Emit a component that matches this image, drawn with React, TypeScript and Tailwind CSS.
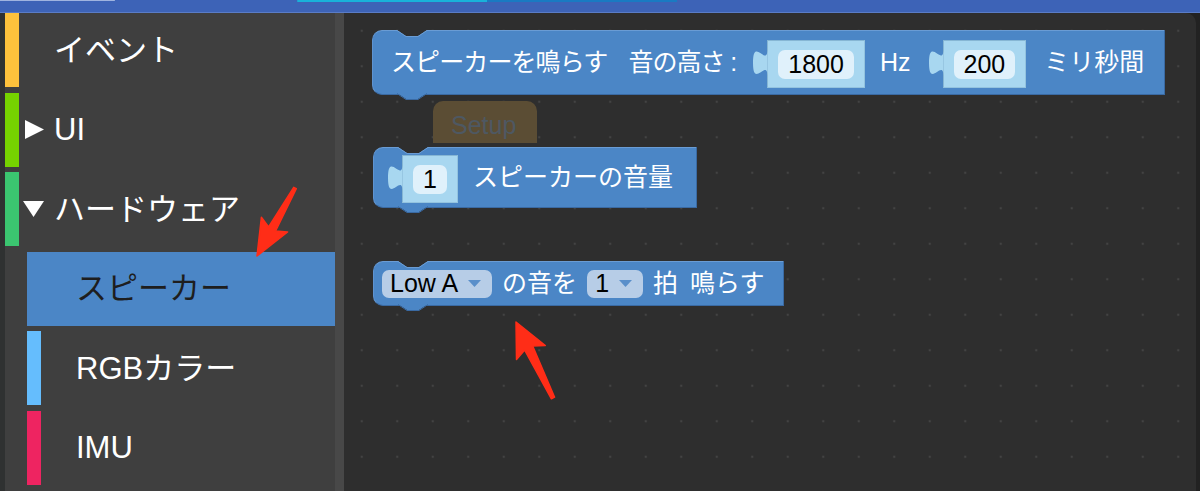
import React from 'react';

type RowProps = {
  bar: string;
  label: string;
  caret?: 'right' | 'down';
  sub?: boolean;
  selected?: boolean;
};

const SideRow: React.FC<RowProps> = ({ bar, label, caret, sub, selected }) => (
  <div
    className={`h-[74px] flex items-center shrink-0 ${sub ? 'ml-[22px]' : ''} ${
      selected ? 'bg-[#4b86c6] text-[#1e1e1e]' : 'text-white'
    }`}
  >
    <div className={`w-[14px] h-full ${bar}`} />
    <div className="w-[35px] flex items-center">
      {caret === 'right' && (
        <svg width="20" height="19" viewBox="0 0 20 19" className="ml-[6px]">
          <polygon points="0,0 19,9.5 0,19" fill="#ffffff" />
        </svg>
      )}
      {caret === 'down' && (
        <svg width="21" height="16" viewBox="0 0 21 16" className="ml-[4px]">
          <polygon points="0,0 21,0 10.5,16" fill="#ffffff" />
        </svg>
      )}
    </div>
    <span className="text-[31px] leading-none">{label}</span>
  </div>
);

const Notch = () => (
  <svg className="absolute left-[24px] top-[-1px]" width="30" height="7" viewBox="0 0 30 7">
    <path d="M0,0 L9,6 L21,6 L30,0 Z" fill="#2e2e2e" />
    <path d="M0,0.5 L9,6.5 L21,6.5 L30,0.5" fill="none" stroke="#6a9cd4" strokeWidth="1" />
  </svg>
);

const Tab = () => (
  <svg className="absolute left-[24px] top-full mt-[-1px]" width="30" height="7" viewBox="0 0 30 7">
    <path d="M0,0 L9,6 L21,6 L30,0 Z" fill="#4b86c6" />
    <path d="M0,0.5 L9,6.5 L21,6.5 L30,0.5" fill="none" stroke="#3a6aa3" strokeWidth="1" />
  </svg>
);

const Slot: React.FC<{ value: string; className: string }> = ({ value, className }) => (
  <div className={`relative flex items-center mt-[3px] ${className}`}>
    <svg className="absolute left-[-14px] top-[10px] overflow-visible" width="14" height="26" viewBox="0 0 14 26">
      <path d="M14.5,0 C14,17 0,-13.6 0,12.75 C0,39 14,8.5 14.5,25.5 Z" fill="#a8d7f0" />
    </svg>
    <div className="h-[48px] px-[10px] flex items-center bg-[#a8d7f0] border border-t-[#86b6d4] border-l-[#86b6d4] border-r-[#93c3df] border-b-[#93c3df]">
      <div className="h-[29px] px-[10px] rounded-[7px] bg-[#e0f1fb] flex items-center text-black text-[25px] leading-none">
        {value}
      </div>
    </div>
  </div>
);

const Dropdown: React.FC<{ value: string }> = ({ value }) => (
  <div className="h-[28px] pl-[8px] pr-[11px] rounded-[7px] bg-[#b7cde7] flex items-center gap-[10px] text-black text-[25px] leading-none">
    <span>{value}</span>
    <svg width="13" height="7" viewBox="0 0 13 7">
      <polygon points="0,0 13,0 6.5,7" fill="#5a8fca" />
    </svg>
  </div>
);

const blockBase =
  'absolute flex items-center bg-[#4b86c6] rounded-l-[10px] border-t border-l border-t-[#6a9cd4] border-l-[#5f93cf] border-b border-r border-b-[#3a6aa3] border-r-[#3a6aa3] text-white text-[25px] leading-none whitespace-nowrap';

export default function App() {
  return (
    <div className="relative w-[1200px] h-[491px] overflow-hidden flex flex-col bg-[#2e2e2e] font-['Liberation_Sans','Noto_Sans_CJK_JP',sans-serif]">
      {/* top bar */}
      <div className="h-[13px] shrink-0 bg-[#3d63b7] border-b border-[#5a7cc6] flex items-start">
        <div className="w-[115px] h-[1px] bg-[#9fb4e0] rounded-r-full" />
        <div className="ml-[182px] w-[190px] h-[2px] bg-[#19b2da] rounded-l-full" />
        <div className="w-[190px] h-[2px] bg-[#1a7ac2]" />
      </div>

      <div className="flex-1 flex min-h-0">
        {/* sidebar */}
        <div className="w-[344px] shrink-0 flex">
          <div className="w-[5px] bg-[#2f3131]" />
          <div className="w-[330px] bg-[#3f3f3f] flex flex-col gap-[5.6px] overflow-hidden">
            <SideRow bar="bg-[#fdc13c]" label="イベント" />
            <SideRow bar="bg-[#76d300]" label="UI" caret="right" />
            <SideRow bar="bg-[#3bc570]" label="ハードウェア" caret="down" />
            <SideRow bar="bg-[#4b86c6]" label="スピーカー" sub selected />
            <SideRow bar="bg-[#65bdfd]" label="RGBカラー" sub />
            <SideRow bar="bg-[#ee2461]" label="IMU" sub />
          </div>
          <div className="w-[9px] bg-[#484848]" />
        </div>

        {/* workspace */}
        <div className="flex-1 bg-[#222222] flex">
          <div className="relative flex-1 mr-[4px] rounded-tr-[10px] bg-[#2e2e2e] bg-[radial-gradient(circle,#434343_1px,transparent_1.6px)] bg-[size:35.5px_35.5px] overflow-hidden">
            {/* block 1 */}
            <div className={`${blockBase} left-[28px] top-[17px] h-[65px] pl-[18px] pr-[20px]`}>
              <Notch />
              <span className="tracking-[-0.9px]">スピーカーを鳴らす</span>
              <span className="ml-[21px] tracking-[-1px]">音の高さ :</span>
              <Slot value="1800" className="ml-[31px]" />
              <span className="ml-[15px]">Hz</span>
              <Slot value="200" className="ml-[32px]" />
              <span className="ml-[18px]">ミリ秒間</span>
              <Tab />
            </div>

            {/* ghost setup block */}
            <div className="absolute left-[89px] top-[88px] w-[104px] h-[42px] rounded-t-[10px] bg-[#5b4d34] pl-[18px] pt-[12px] text-[25px] leading-none text-[#4e5862]">
              Setup
            </div>

            {/* block 2 */}
            <div className={`${blockBase} left-[29px] top-[134px] h-[61px] pl-[0px] pr-[23px]`}>
              <Notch />
              <Slot value="1" className="ml-[28px]" />
              <span className="ml-[15px]">スピーカーの音量</span>
              <Tab />
            </div>

            {/* block 3 */}
            <div className={`${blockBase} left-[29px] top-[248px] h-[45px] pl-[8px] pr-[18px] gap-[10px]`}>
              <Notch />
              <Dropdown value="Low A" />
              <span>の音を</span>
              <Dropdown value="1" />
              <span>拍</span>
              <span className="ml-[2px]">鳴らす</span>
              <Tab />
            </div>
          </div>
        </div>
      </div>

      {/* annotation arrows */}
      <svg className="absolute left-0 top-0 pointer-events-none" width="1200" height="491" viewBox="0 0 1200 491">
        <polygon
          points="296.3,188.7 275.6,231 287.6,231.9 257,256 261.4,217.3 268.6,227 293.7,187.3"
          fill="#ff2d17"
          stroke="#ff2d17"
          strokeWidth="1.5"
          strokeLinejoin="round"
        />
        <polygon
          points="554.6,397.2 532.7,346.1 545.3,345.6 516,322 516.5,359.6 524.7,350.1 551.4,398.8"
          fill="#ff2d17"
          stroke="#ff2d17"
          strokeWidth="1.5"
          strokeLinejoin="round"
        />
      </svg>
    </div>
  );
}
